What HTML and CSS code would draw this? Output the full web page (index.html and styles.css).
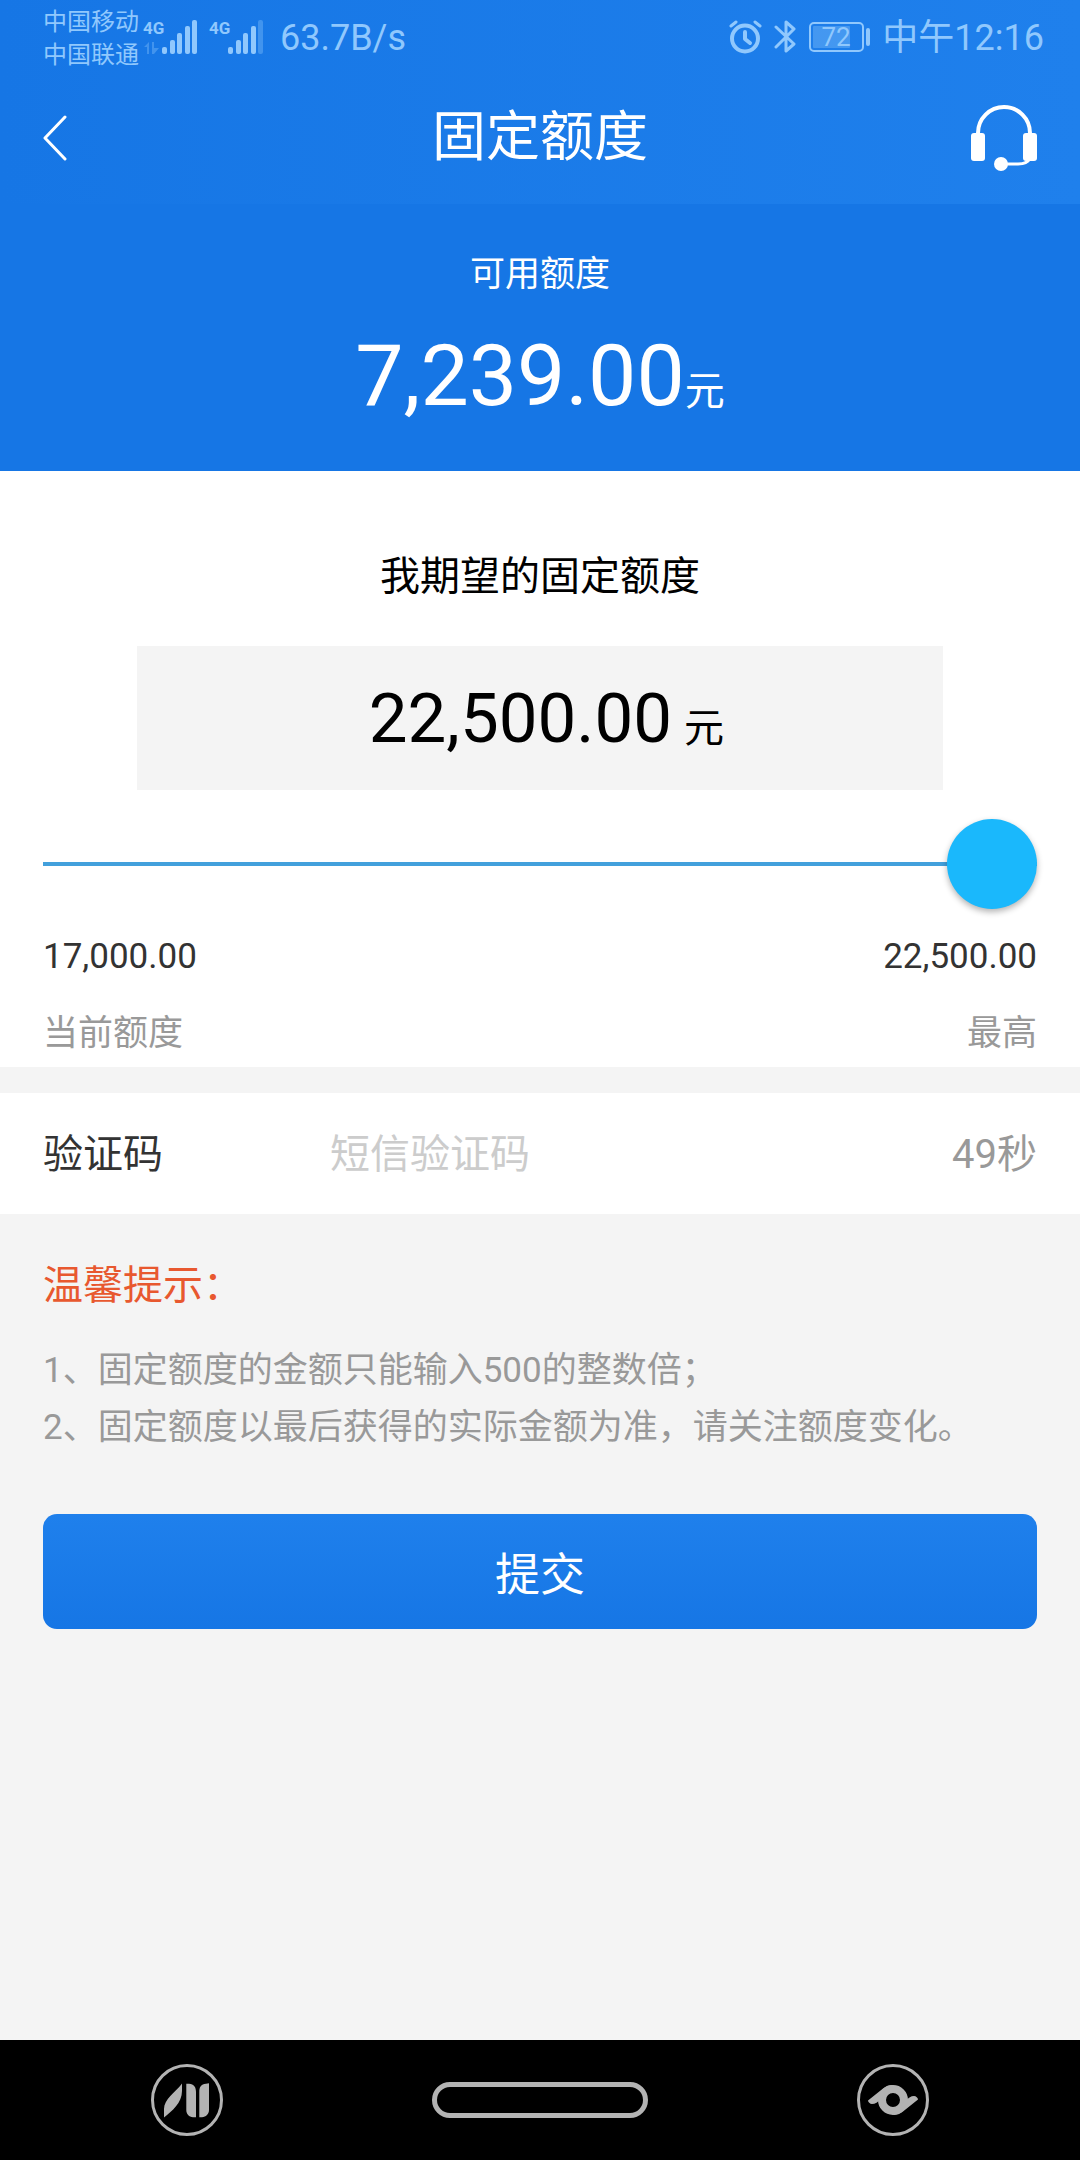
FILE: index.html
```html
<!DOCTYPE html>
<html lang="zh-CN">
<head>
<meta charset="utf-8">
<meta name="viewport" content="width=device-width, initial-scale=1">
<title>固定额度</title>
<link rel="stylesheet" href="styles.css">
</head>
<body>
<div class="topbar">
  <div class="status">
    <div class="status-left">
      <div class="carriers"><span>中国移动</span><span>中国联通</span></div>
      <svg class="signal" viewBox="0 0 54 34" aria-hidden="true">
        <text class="net" x="-1" y="14">4G</text>
        <g class="dim"><path d="M0 27 L5 22 V34 H3 V27Z M8 22 H10 V28 H15 L10 34 H8Z"/></g>
        <rect x="18" y="27" width="5" height="7" rx="2"/>
        <rect x="26" y="20" width="5" height="14" rx="2"/>
        <rect x="33" y="13" width="5" height="21" rx="2"/>
        <rect x="41" y="6" width="5" height="28" rx="2"/>
        <rect x="48" y="0" width="5" height="34" rx="2"/>
      </svg>
      <svg class="signal" viewBox="0 0 54 34" aria-hidden="true">
        <text class="net" x="-1" y="14">4G</text>
        <rect x="18" y="27" width="5" height="7" rx="2"/>
        <rect x="26" y="20" width="5" height="14" rx="2"/>
        <rect x="33" y="13" width="5" height="21" rx="2"/>
        <rect x="41" y="6" width="5" height="28" rx="2"/>
        <rect class="dim" x="48" y="0" width="5" height="34" rx="2"/>
      </svg>
      <span class="speed">63.7B/s</span>
    </div>
    <div class="status-right">
      <svg class="alarm" viewBox="0 0 34 34" aria-hidden="true">
        <circle cx="16" cy="18.500" r="13" fill="none" stroke-width="4"/>
        <path d="M16 12 V19 L21 23" fill="none" stroke-width="4" stroke-linecap="round" stroke-linejoin="round"/>
        <path d="M2 6 L7 2 M26 2 L31 6" fill="none" stroke-width="3" stroke-linecap="round"/>
      </svg>
      <svg class="bluetooth" viewBox="0 0 24 36" aria-hidden="true">
        <path d="M2 8 L20 25 L12 32 V3 L20 10 L2 28" fill="none" stroke-width="3" stroke-linecap="round" stroke-linejoin="round"/>
      </svg>
      <svg class="battery" viewBox="0 0 62 30" aria-hidden="true">
        <rect x="1" y="1" width="53" height="28" rx="4" fill="none" stroke-width="2"/>
        <rect class="charge" x="4" y="4" width="37" height="22" rx="1"/>
        <rect class="cap" x="57" y="6" width="4" height="18" rx="2"/>
        <text class="level" x="27" y="24" text-anchor="middle">72</text>
      </svg>
      <span class="time">中午12:16</span>
    </div>
  </div>
  <header class="header">
    <button class="icon-btn back" type="button" aria-label="返回">
      <svg viewBox="0 0 24 46"><path d="M22 2 L2 23 L22 44" fill="none" stroke="#fff" stroke-width="3" stroke-linecap="round" stroke-linejoin="round"/></svg>
    </button>
    <h1 class="title">固定额度</h1>
    <button class="icon-btn service" type="button" aria-label="客服">
      <svg viewBox="0 0 66 66">
        <path d="M7 31 V28 A26 26 0 0 1 59 28 V31" fill="none" stroke="#fff" stroke-width="4"/>
        <rect x="0" y="28" width="14" height="28" rx="3" fill="#fff"/>
        <rect x="52" y="28" width="14" height="28" rx="3" fill="#fff"/>
        <path d="M32 59 H47 C53 59 57 58 59 53" fill="none" stroke="#fff" stroke-width="3"/>
        <circle cx="30" cy="59" r="7" fill="#fff"/>
      </svg>
    </button>
  </header>
</div>

<main class="content">
  <section class="hero">
    <p class="hero-label">可用额度</p>
    <p class="hero-amount">7,239.00<small>元</small></p>
  </section>

  <form class="form">
    <section class="limit">
      <label class="limit-title" for="amount">我期望的固定额度</label>
      <div class="amount-box">
        <input class="amount" id="amount" type="text" inputmode="decimal" value="22,500.00">
        <span class="unit">元</span>
      </div>
      <input class="slider" type="range" min="17000" max="22500" step="500" value="22500" aria-label="固定额度">
      <dl class="range">
        <div class="range-end"><dd>17,000.00</dd><dt>当前额度</dt></div>
        <div class="range-end right"><dd>22,500.00</dd><dt>最高</dt></div>
      </dl>
    </section>

    <section class="code-row">
      <label class="code-label" for="code">验证码</label>
      <input class="code" id="code" type="text" inputmode="numeric" placeholder="短信验证码">
      <button class="countdown" type="button" disabled>49秒</button>
    </section>

    <section class="tips">
      <h2 class="tips-title">温馨提示：</h2>
      <p class="tip">1、固定额度的金额只能输入500的整数倍；</p>
      <p class="tip">2、固定额度以最后获得的实际金额为准，请关注额度变化。</p>
    </section>

    <button class="submit" type="submit">提交</button>
  </form>
</main>

<nav class="navbar">
  <button class="nav-btn" type="button" aria-label="多任务">
    <svg width="72" height="72" viewBox="0 0 72 72">
      <circle cx="36" cy="36" r="34.500" fill="none" stroke="#b3b3b3" stroke-width="3"/>
      <path fill="#b3b3b3" d="M31 19.500 V27 C31 39 21 47 13 53.500 V45 C13 35 24 29 31 19.500Z M35.300 19.700 H38 C43 20 45 23 45 28 V53.300 H42 C38 53 35.300 50 35.300 46Z M58 19.300 V46 C58 50 55 53 51 53.300 H48.300 V28 C48.300 23 50 20 55 19.700Z"/>
    </svg>
  </button>
  <button class="nav-btn home" type="button" aria-label="主页"></button>
  <button class="nav-btn" type="button" aria-label="返回上一级">
    <svg width="72" height="72" viewBox="0 0 72 72">
      <circle cx="36" cy="36" r="34.500" fill="none" stroke="#b3b3b3" stroke-width="3"/>
      <circle cx="36" cy="36" r="11" fill="none" stroke="#b3b3b3" stroke-width="8"/>
      <path fill="#b3b3b3" d="M11 36.500 L26 24.500 C29 22 32 21 36 21 L27 32 L24 35 C21 38 18 40 15 40 C13 40 11 38 11 36.500Z"/>
      <path fill="#b3b3b3" transform="rotate(180 36 36)" d="M11 36.500 L26 24.500 C29 22 32 21 36 21 L27 32 L24 35 C21 38 18 40 15 40 C13 40 11 38 11 36.500Z"/>
    </svg>
  </button>
</nav>
</body>
</html>
```
FILE: styles.css
```css
* {
  box-sizing: border-box;
  margin: 0;
  padding: 0;
}

body {
  min-height: 100vh;
  display: flex;
  flex-direction: column;
  background: #f4f4f4;
  color: #333;
  font-family: Roboto, "Noto Sans CJK SC", sans-serif;
  font-size: 35px;
}

button,
input {
  border: 0;
  background: none;
  font: inherit;
  color: inherit;
  outline: 0;
}

svg {
  display: block;
}

/* Status bar and page header */
.topbar {
  background: linear-gradient(to right, #1676e5, #1f80ec);
}

.status {
  height: 72px;
  padding: 2px 36px 0 43px;
  display: flex;
  justify-content: space-between;
  align-items: center;
  color: #90c8fd;
  font-size: 36px;
  line-height: 40px;
}

.status-left,
.status-right {
  display: flex;
  align-items: center;
}

.status-left {
  gap: 12px;
}

.status-right {
  gap: 11px;
}

.carriers {
  display: flex;
  flex-direction: column;
  margin-right: -7px;
  padding-top: 4px;
  font-size: 24px;
  line-height: 33px;
}

.signal {
  width: 54px;
  height: 34px;
  fill: currentColor;
  overflow: visible;
}

.net {
  font-size: 17px;
  font-weight: 700;
}

.dim {
  opacity: .35;
}

.speed {
  margin-left: 4px;
  padding-top: 2px;
}

.time {
  padding-top: 2px;
}

.alarm,
.bluetooth,
.battery {
  stroke: currentColor;
}

.alarm {
  width: 34px;
  height: 34px;
}

.bluetooth {
  width: 24px;
  height: 36px;
}

.battery {
  width: 62px;
  height: 30px;
}

.charge {
  fill: currentColor;
  stroke: none;
  opacity: .35;
}

.cap,
.level {
  fill: currentColor;
  stroke: none;
}

.level {
  font-size: 26px;
}

.header {
  height: 132px;
  padding: 0 43px;
  display: grid;
  grid-template-columns: 66px 1fr 66px;
  align-items: center;
  color: #fff;
}

.icon-btn.back svg {
  width: 24px;
  height: 46px;
}

.icon-btn.service svg {
  width: 66px;
  height: 66px;
}

.title {
  text-align: center;
  font-size: 54px;
  font-weight: 400;
  line-height: 60px;
}

/* Available credit */
.content {
  flex: 1;
}

.hero {
  padding: 46px 43px 45px;
  background: #1676e5;
  color: #fff;
  text-align: center;
}

.hero-label {
  line-height: 50px;
}

.hero-amount {
  margin-top: 26px;
  font-size: 86px;
  line-height: 100px;
}

.hero-amount small {
  font-size: 40px;
  line-height: 1;
}

/* Desired limit */
.limit {
  padding: 76px 43px 8px;
  display: flex;
  flex-direction: column;
  background: #fff;
}

.limit-title {
  text-align: center;
  font-size: 40px;
  line-height: 60px;
  color: #000;
}

.amount-box {
  width: 81%;
  height: 144px;
  margin: 39px auto 29px;
  padding-left: 10px;
  display: flex;
  justify-content: center;
  align-items: baseline;
  gap: 12px;
  background: #f4f4f4;
  color: #000;
  line-height: 146px;
}

.amount {
  width: 306px;
  height: 146px;
  text-align: right;
  font-size: 69px;
}

.unit {
  font-size: 40px;
}

.slider {
  appearance: none;
  width: 100%;
  height: 90px;
  background: linear-gradient(#42a0dc, #42a0dc) center / 100% 4px no-repeat;
}

.slider::-webkit-slider-thumb {
  appearance: none;
  width: 90px;
  height: 90px;
  border-radius: 50%;
  background: #1ab8fc;
  box-shadow: 0 3px 6px rgba(0, 0, 0, .3);
}

.range {
  margin-top: 23px;
  display: flex;
  justify-content: space-between;
  line-height: 50px;
}

.range-end {
  display: flex;
  flex-direction: column;
  gap: 27px;
}

.range-end.right {
  text-align: right;
}

.range dt {
  color: #999;
}

/* Verification code */
.code-row {
  height: 121px;
  margin-top: 26px;
  padding: 2px 43px 0;
  display: grid;
  grid-template-columns: 287px 1fr auto;
  align-items: center;
  background: #fff;
  font-size: 40px;
  line-height: 60px;
}

.code {
  width: 100%;
  height: 60px;
}

.code::placeholder {
  color: #ccc;
}

.countdown {
  color: #999;
}

/* Tips and submit */
.tips {
  padding: 42px 43px 0;
}

.tips-title {
  margin-bottom: 26px;
  color: #e8582f;
  font-size: 40px;
  font-weight: 400;
  line-height: 60px;
}

.tip {
  color: #999;
  line-height: 57px;
}

.submit {
  display: block;
  width: calc(100% - 86px);
  height: 115px;
  margin: 58px 43px;
  border-radius: 14px;
  background: linear-gradient(#1f80ec, #1676e5);
  color: #fff;
  font-size: 45px;
}

/* System navigation */
.navbar {
  height: 120px;
  padding: 0 14%;
  display: flex;
  justify-content: space-between;
  align-items: center;
  background: #000;
}

.home {
  width: 216px;
  height: 36px;
  border: 5px solid #b3b3b3;
  border-radius: 18px;
}
```
